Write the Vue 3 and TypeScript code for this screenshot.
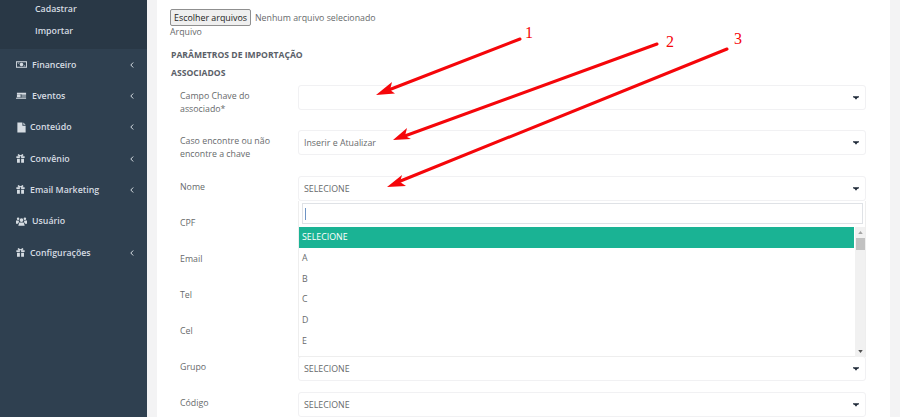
<script setup lang="ts">
interface MenuItem {
  label: string
  icon: string
  arrow: boolean
}

interface FieldRow {
  label: string
  value: string
  tall?: boolean
}

const menu: MenuItem[] = [
  { label: 'Financeiro', icon: 'money', arrow: true },
  { label: 'Eventos', icon: 'news', arrow: true },
  { label: 'Conteúdo', icon: 'file', arrow: true },
  { label: 'Convênio', icon: 'gift', arrow: true },
  { label: 'Email Marketing', icon: 'gift', arrow: true },
  { label: 'Usuário', icon: 'users', arrow: false },
  { label: 'Configurações', icon: 'gift', arrow: true },
]

// CPF to Cel sit under the open dropdown, so their value is never seen
const rows: FieldRow[] = [
  { label: 'Campo Chave do associado*', value: '', tall: true },
  { label: 'Caso encontre ou não encontre a chave', value: 'Inserir e Atualizar', tall: true },
  { label: 'Nome', value: 'SELECIONE' },
  { label: 'CPF', value: '' },
  { label: 'Email', value: '' },
  { label: 'Tel', value: '' },
  { label: 'Cel', value: '' },
  { label: 'Grupo', value: 'SELECIONE' },
  { label: 'Código', value: 'SELECIONE' },
]

const options = ['A', 'B', 'C', 'D', 'E']
</script>

<template>
  <div class="page">
    <aside class="sidebar">
      <ul class="submenu">
        <li>Cadastrar</li>
        <li>Importar</li>
      </ul>
      <ul class="menu">
        <li v-for="item in menu" :key="item.label" class="menu-item">
          <svg class="menu-icon" :class="`menu-icon--${item.icon}`" viewBox="0 0 12 12">
            <template v-if="item.icon === 'money'">
              <path fill-rule="evenodd" d="M0 2.500h12v7H0zM1 3.500v5h10v-5zM6 4a2 2 0 1 1 0 4 2 2 0 0 1 0-4z" />
              <path d="M2 4h1.500v1H2zM8.500 7H10v1H8.500z" />
            </template>
            <path
              v-else-if="item.icon === 'news'"
              d="M1 3h10v1.500H1zM1 5h4v3H1zM6 5h5v1H6zM6 7h5v1H6zM0 8.500h11V9.500H0z"
            />
            <path v-else-if="item.icon === 'file'" d="M1.500 0.500H7V4h3.500v7.500h-9zM8 0.500l2.500 2.500H8z" />
            <path
              v-else-if="item.icon === 'gift'"
              d="M1.500 3.500h3.800v2h-3.800zM6.700 3.500h3.800v2H6.700zM2.200 6.200h3.100v4.300H2.200zM6.700 6.200h3.100v4.300H6.700zM3.500 1 6 2.500 8.500 1l.8 1.500-1.500 1H4.200l-1.500-1z"
            />
            <path
              v-else
              d="M6 2.500a2 2 0 1 1 0 4 2 2 0 0 1 0-4zM2.300 1.500a1.400 1.400 0 1 1 0 2.800 1.400 1.400 0 0 1 0-2.800zM9.700 1.500a1.400 1.400 0 1 1 0 2.800 1.400 1.400 0 0 1 0-2.800zM3.500 7h5l1 3.500h-7zM0 5h2.800l.5 1.500L2 8.500H0zM9.200 5H12v3.500h-2l-1.300-2z"
            />
          </svg>
          <span class="menu-label">{{ item.label }}</span>
          <svg v-if="item.arrow" class="chevron" viewBox="0 0 4 6">
            <path d="M3.200 0.500 0.800 3l2.400 2.500" />
          </svg>
        </li>
      </ul>
    </aside>

    <main class="content">
      <div class="file-row">
        <button class="file-button" type="button">Escolher arquivos</button>
        <span>Nenhum arquivo selecionado</span>
      </div>
      <div class="file-caption">Arquivo</div>
      <h4 class="section-title section-title--first">PARÂMETROS DE IMPORTAÇÃO</h4>
      <h4 class="section-title">ASSOCIADOS</h4>

      <div class="form">
        <div v-for="row in rows" :key="row.label" class="row" :class="{ 'row--tall': row.tall }">
          <label class="row-label">{{ row.label }}</label>
          <div class="select">
            <span>{{ row.value }}</span>
            <svg class="caret" viewBox="0 0 7 4"><path d="M0 0h7v1L5 2 3.500 4 2 2 0 1z" /></svg>
          </div>
        </div>

        <div class="dropdown">
          <div class="search-wrap">
            <div class="search"><i class="cursor" /></div>
          </div>
          <div class="results">
            <ul class="options">
              <li class="option option--active">SELECIONE</li>
              <li v-for="option in options" :key="option" class="option">{{ option }}</li>
            </ul>
            <div class="scrollbar">
              <svg class="scroll-arrow" viewBox="0 0 6 4"><path d="M3 0 6 4H0z" /></svg>
              <div class="scroll-thumb" />
              <svg class="scroll-arrow scroll-arrow--down" viewBox="0 0 6 4"><path d="M0 0h6L3 4z" /></svg>
            </div>
          </div>
        </div>
      </div>
    </main>

    <!-- red annotations drawn over the screenshot -->
    <svg class="notes" viewBox="0 0 900 417">
      <g stroke="#f5060a" stroke-width="3" stroke-linecap="round">
        <line x1="520" y1="39" x2="386" y2="91" />
        <line x1="657" y1="44" x2="402" y2="137" />
        <line x1="727" y1="49" x2="398" y2="182" />
      </g>
      <g fill="#f5060a">
        <path d="M376 95 392 82 390 90 395 93.500z" />
        <path d="M393 140 407 128 405 136 411 139z" />
        <path d="M387 187 402 175 400 182 406 186z" />
      </g>
      <g class="note-text" fill="#f5060a">
        <text x="525" y="38">1</text>
        <text x="666" y="47">2</text>
        <text x="734" y="44">3</text>
      </g>
    </svg>
  </div>
</template>

<style scoped>
.page {
  position: relative;
  display: flex;
  width: 900px;
  height: 417px;
  overflow: hidden;
  background: #f3f3f4;
  font-family: "Open Sans", sans-serif;
  font-size: 8.800px;
  color: #676a6c;
}

.sidebar {
  width: 147px;
  flex: none;
  background: #2f4050;
  color: #d6dce2;
  font-weight: 600;
}

ul {
  margin: 0;
  padding: 0;
  list-style: none;
}

.submenu {
  height: 49px;
  padding-left: 35px;
  background: #293846;
  box-sizing: border-box;
}

.submenu li {
  height: 22px;
  line-height: 22px;
  position: relative;
  top: -2px;
}

.menu-item {
  display: flex;
  align-items: center;
  height: 31.330px;
  padding-left: 16px;
}

.menu-icon {
  width: 11px;
  height: 11px;
  margin-right: 4px;
  fill: #d6dce2;
}

.menu-icon--money,
.menu-icon--users {
  margin-right: 5px;
}

.menu-icon--news {
  margin-right: 5px;
}

.menu-icon--file {
  margin-right: 3px;
}

.menu-icon--gift {
  margin-left: -1px;
  margin-right: 4px;
}

.menu-label {
  flex: 1;
}

.chevron {
  width: 4px;
  height: 6px;
  margin-right: 13px;
  fill: none;
  stroke: #d6dce2;
  stroke-width: 1;
}

.content {
  width: 733px;
  margin-left: 10px;
  flex: none;
  box-sizing: border-box;
  padding: 9px 24px 0 13px;
  background: #fff;
}

.file-row {
  display: flex;
  align-items: center;
  gap: 4px;
  height: 17px;
}

.file-button {
  width: 81px;
  height: 17px;
  padding: 0;
  border: 1px solid #8f8f8f;
  border-radius: 2px;
  background: #efefef;
  font: 8.900px "Open Sans", sans-serif;
  color: #222;
}

.file-caption {
  height: 13px;
  line-height: 13px;
}

.section-title {
  margin: 0;
  padding-left: 1px;
  height: 18px;
  line-height: 18px;
  font-size: 8.600px;
  font-weight: 700;
  color: #5a6068;
}

.section-title--first {
  margin-top: 7px;
}

.form {
  position: relative;
  margin-top: 3px;
}

.row {
  display: flex;
  height: 25px;
  margin-bottom: 11px;
}

.row--tall {
  margin-bottom: 20px;
}

.row:nth-child(2) {
  margin-bottom: 21px;
}

.row-label {
  width: 128px;
  flex: none;
  padding: 0 10px;
  box-sizing: border-box;
  line-height: 12.500px;
  margin-top: 5px;
}

.row--tall .row-label {
  padding-right: 24px;
}

.select {
  flex: 1;
  display: flex;
  align-items: center;
  justify-content: space-between;
  box-sizing: border-box;
  height: 25px;
  padding: 0 6px 0 5px;
  border: 1px solid #f1f1f3;
  border-radius: 3px;
  background: #fff;
}

.caret {
  width: 6px;
  height: 4px;
  fill: #1f2a38;
}

.dropdown {
  position: absolute;
  left: 128px;
  right: 0;
  top: 116px;
  height: 156px;
  box-sizing: border-box;
  border: 1px solid #eeeeee;
  border-top: 0;
  background: #fff;
}

.search-wrap {
  padding: 2px 2px 3px 3px;
}

.search {
  display: flex;
  align-items: center;
  height: 21px;
  box-sizing: border-box;
  padding-left: 2px;
  border: 1px solid #dfe2e6;
}

.cursor {
  display: block;
  width: 1px;
  height: 12px;
  background: #6e93c4;
}

.results {
  display: flex;
  height: 130px;
}

.options {
  flex: 1;
}

.option {
  height: 20.800px;
  line-height: 20.800px;
  padding-left: 3px;
}

.option--active {
  background: #1ab394;
  color: #fff;
}

.scrollbar {
  position: relative;
  width: 10px;
  margin-left: 1px;
  background: #f1f1f1;
}

.scroll-arrow {
  position: absolute;
  left: 2.500px;
  top: 4px;
  width: 5px;
  height: 3px;
  fill: #a3a3a3;
}

.scroll-arrow--down {
  top: auto;
  bottom: 4px;
  fill: #505050;
}

.scroll-thumb {
  position: absolute;
  left: 1px;
  right: 0;
  top: 11px;
  height: 12px;
  background: #c1c1c1;
}

.notes {
  position: absolute;
  inset: 0;
  width: 900px;
  height: 417px;
  pointer-events: none;
}

.note-text {
  font-family: "Liberation Serif", serif;
  font-size: 16px;
}
</style>
